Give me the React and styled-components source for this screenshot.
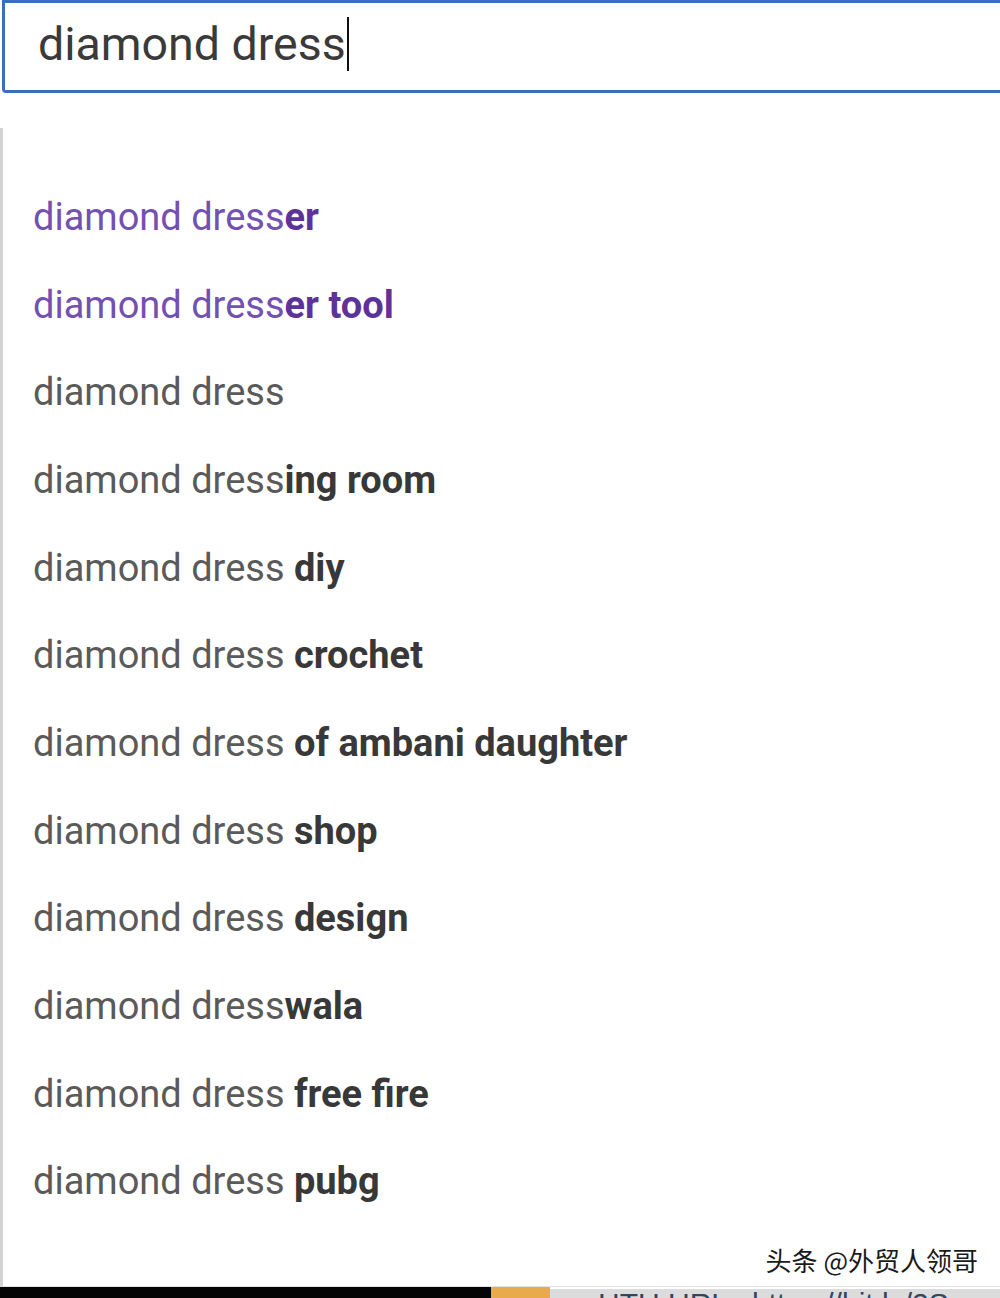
import React from 'react'
import styled, { createGlobalStyle } from 'styled-components'

const GlobalStyle = createGlobalStyle`
html, body {
  margin: 0;
  padding: 0;
  background: #fff;
  overflow: hidden;
}
body {
  font-family: Roboto, "Noto Sans", Arial, sans-serif;
}
`

const Page = styled.div`
width: 1000px;
height: 1298px;
display: flex;
flex-direction: column;
position: relative;
overflow: hidden;
background: #fff;
`

const SearchBox = styled.div`
height: 87px;
margin-left: 2px;
border: 3px solid #3a6ec0;
border-right: none;
border-radius: 0 0 0 4px;
display: flex;
align-items: center;
padding-left: 33px;
box-sizing: content-box;
`

const Query = styled.span`
font-size: 46.5px;
color: #3a3a3a;
line-height: 1;
padding-bottom: 4px;
`

const Caret = styled.span`
display: inline-block;
width: 2px;
height: 54px;
background: #111;
margin-left: 1px;
position: relative;
top: -3px;
`

const Dropdown = styled.ul`
list-style: none;
margin: 35px 0 0 0;
padding: 45px 0 58px 0;
border-left: 3px solid #d3d3d3;
border-bottom: 1px solid #e4e4e4;
flex: 1;
display: flex;
flex-direction: column;
`

const Item = styled.li`
height: 87.7px;
display: flex;
align-items: center;
padding-left: 30px;
font-size: 38px;
white-space: pre;
color: ${p => (p.$visited ? '#7450b0' : '#5a5a5a')};
`

const Rest = styled.b`
font-weight: 700;
color: ${p => (p.$visited ? '#5e3398' : '#383838')};
`

const Strip = styled.div`
height: 11px;
display: flex;
overflow: hidden;
flex-shrink: 0;
`

const Block = styled.div`
width: ${p => p.$w}px;
background: ${p => p.$bg};
flex-shrink: 0;
`

const StripText = styled.div`
flex: 1;
background: #dcdcdc;
padding-left: 48px;
font-family: "Liberation Sans", Arial, sans-serif;
font-size: 30px;
line-height: 30px;
color: #34455e;
white-space: nowrap;
margin-top: 2px;
`

const Watermark = styled.div`
position: absolute;
right: 22px;
bottom: 20px;
font-family: "Noto Sans CJK SC", sans-serif;
font-size: 26px;
color: #1a1a1a;
text-shadow: 1px 1px 0 #fff, -1px -1px 0 #fff, 1px -1px 0 #fff, -1px 1px 0 #fff;
`

const suggestions = [
  { base: 'diamond dress', rest: 'er', visited: true },
  { base: 'diamond dress', rest: 'er tool', visited: true },
  { base: 'diamond dress', rest: '' },
  { base: 'diamond dress', rest: 'ing room' },
  { base: 'diamond dress ', rest: 'diy' },
  { base: 'diamond dress ', rest: 'crochet' },
  { base: 'diamond dress ', rest: 'of ambani daughter' },
  { base: 'diamond dress ', rest: 'shop' },
  { base: 'diamond dress ', rest: 'design' },
  { base: 'diamond dress', rest: 'wala' },
  { base: 'diamond dress ', rest: 'free fire' },
  { base: 'diamond dress ', rest: 'pubg' },
]

const App = () => {
  return (
    <>
      <GlobalStyle />
      <Page>
        <SearchBox>
          <Query>diamond dress</Query>
          <Caret />
        </SearchBox>
        <Dropdown>
          {suggestions.map((s, i) => (
            <Item key={i} $visited={s.visited}>
              {s.base}
              {s.rest && <Rest $visited={s.visited}>{s.rest}</Rest>}
            </Item>
          ))}
        </Dropdown>
        <Strip>
          <Block $w={491} $bg="#050505" />
          <Block $w={59} $bg="#e9aa4c" />
          <StripText>HTU URL : https://bit.ly/2S</StripText>
        </Strip>
        <Watermark>头条 @外贸人领哥</Watermark>
      </Page>
    </>
  )
}

export default App
